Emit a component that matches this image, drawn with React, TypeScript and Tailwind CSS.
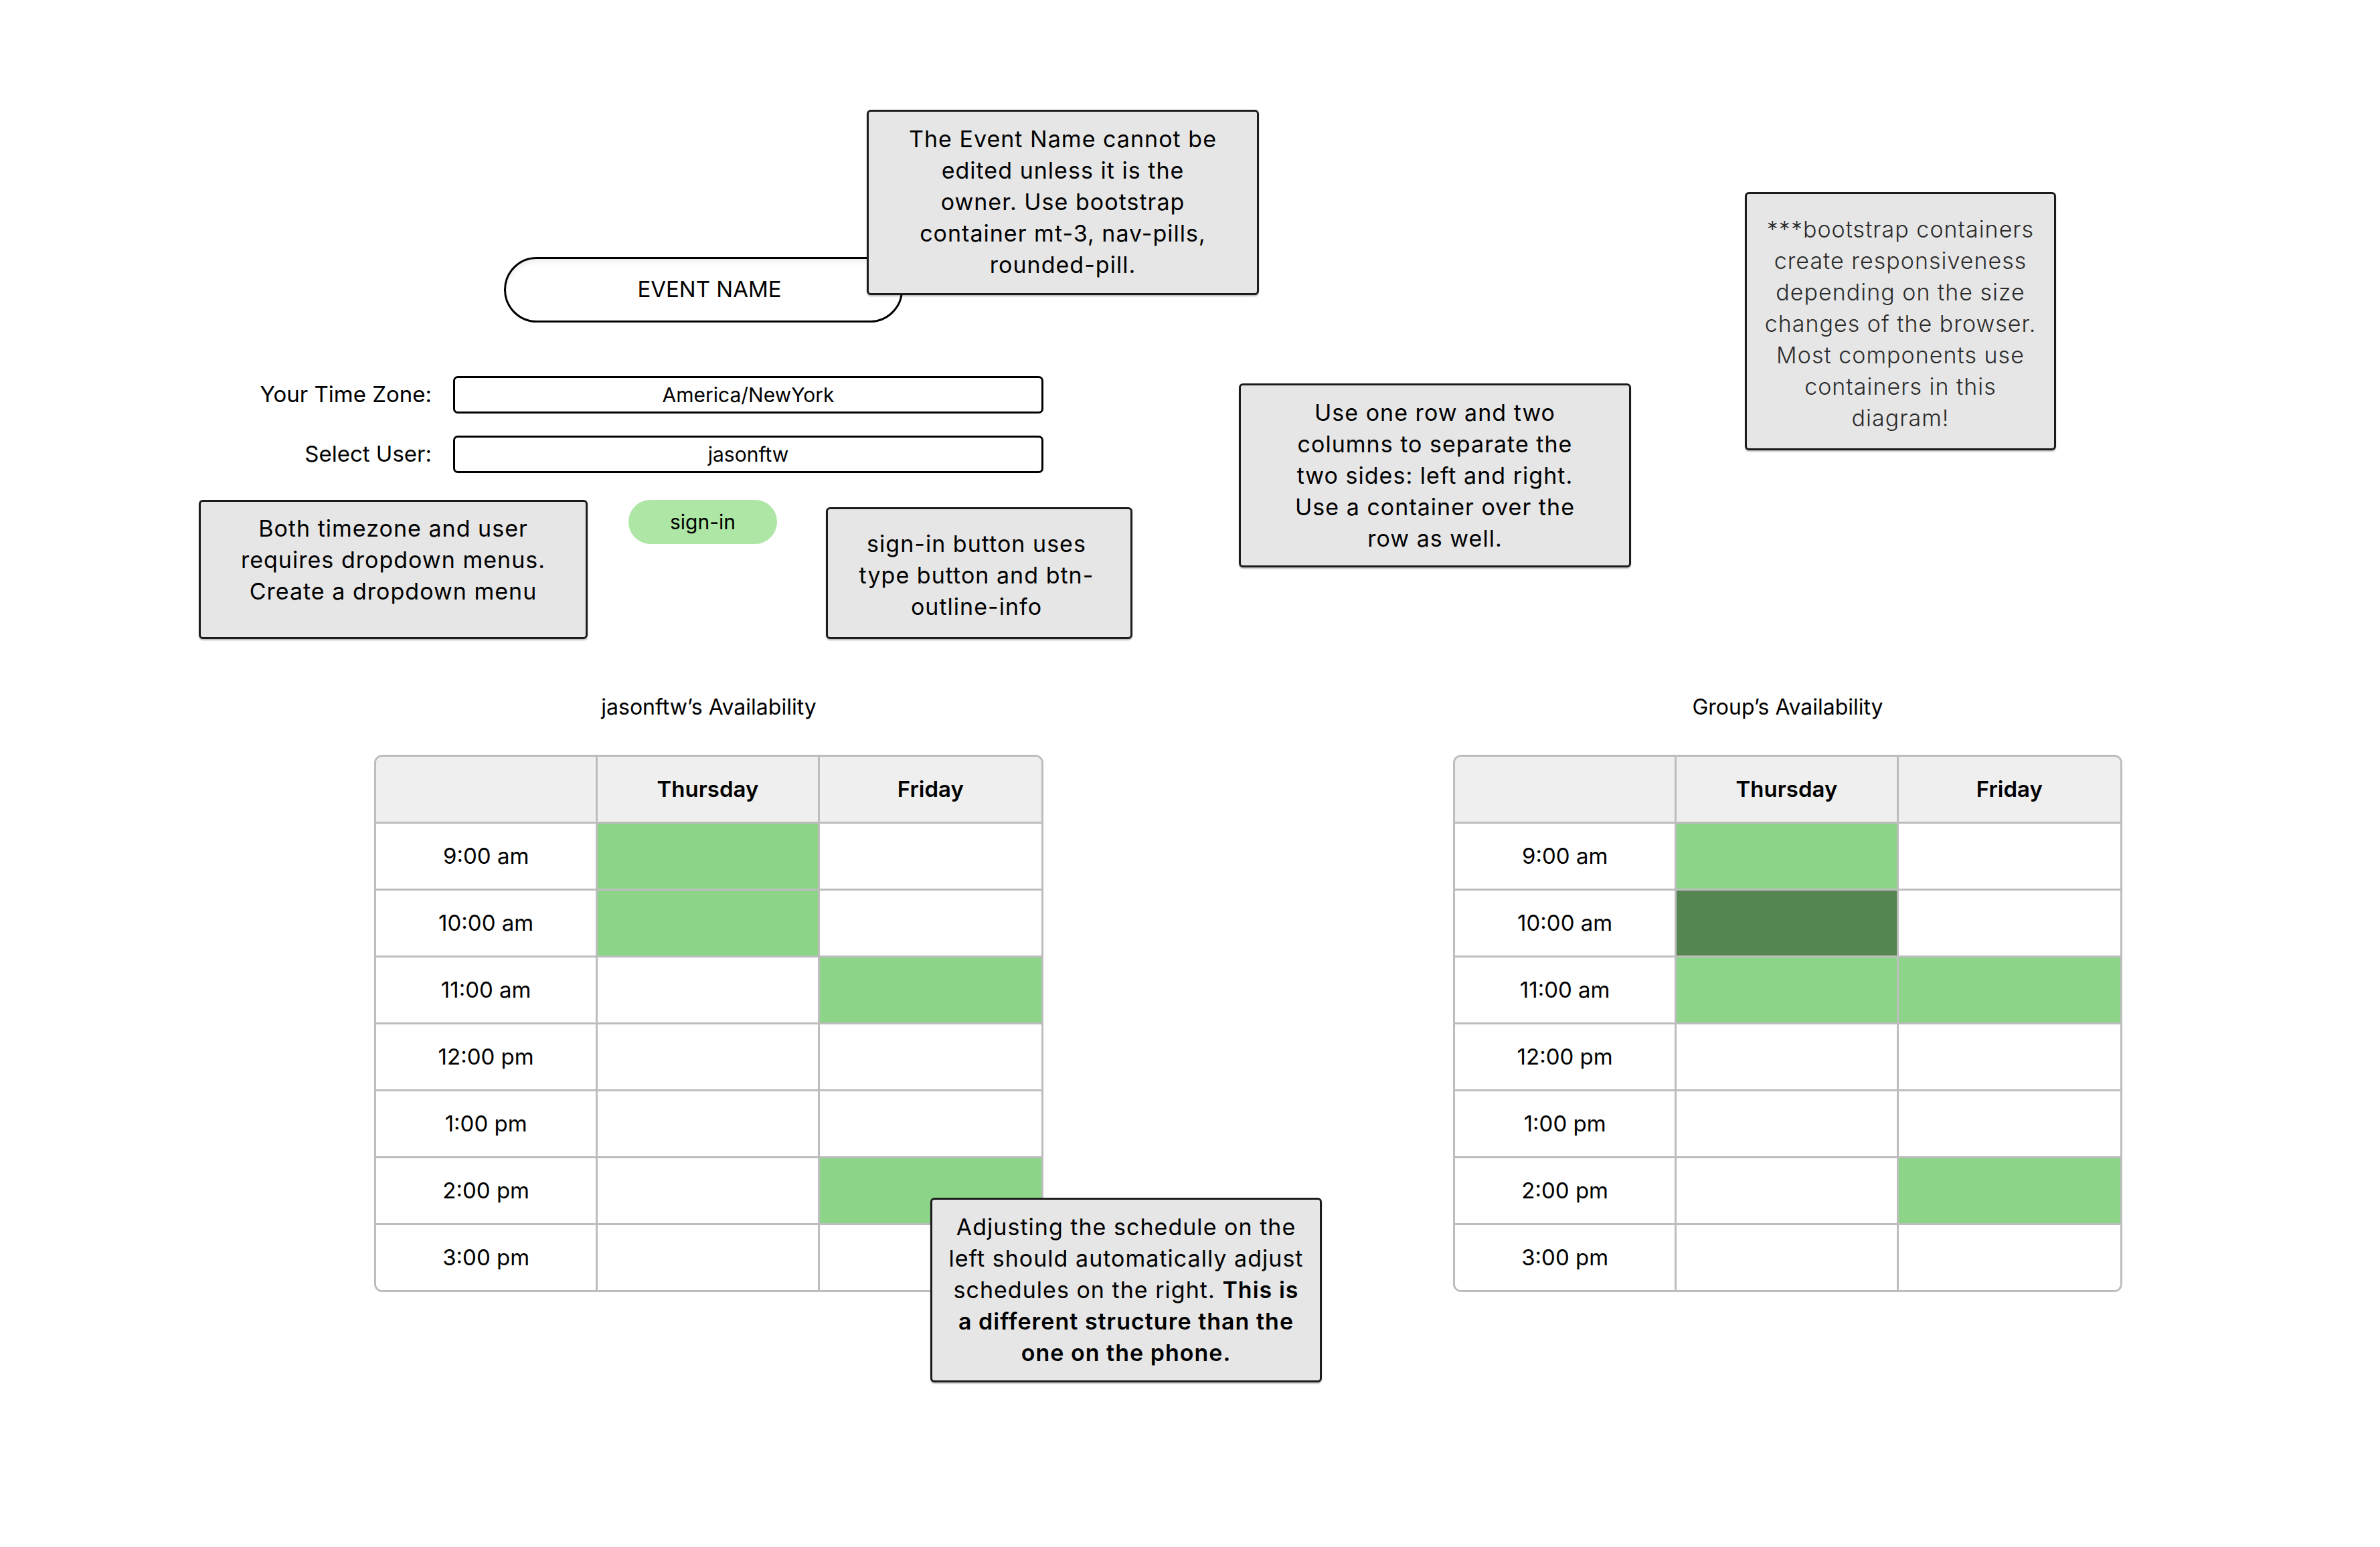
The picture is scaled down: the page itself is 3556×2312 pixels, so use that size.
import React from "react";

/**
 * Event availability wireframe (desktop layout)
 *
 * Main column holds the event name pill, the timezone / user pickers,
 * the sign-in button and the two availability grids. Annotation notes
 * sit on top of the canvas like sticky notes.
 */

type Slot = 0 | 1 | 2; // 0 = free, 1 = available, 2 = everyone available

interface Row {
  time: string;
  thu: Slot;
  fri: Slot;
}

const myRows: Row[] = [
  { time: "9:00 am", thu: 1, fri: 0 },
  { time: "10:00 am", thu: 1, fri: 0 },
  { time: "11:00 am", thu: 0, fri: 1 },
  { time: "12:00 pm", thu: 0, fri: 0 },
  { time: "1:00 pm", thu: 0, fri: 0 },
  { time: "2:00 pm", thu: 0, fri: 1 },
  { time: "3:00 pm", thu: 0, fri: 0 },
];

const groupRows: Row[] = [
  { time: "9:00 am", thu: 1, fri: 0 },
  { time: "10:00 am", thu: 2, fri: 0 },
  { time: "11:00 am", thu: 1, fri: 1 },
  { time: "12:00 pm", thu: 0, fri: 0 },
  { time: "1:00 pm", thu: 0, fri: 0 },
  { time: "2:00 pm", thu: 0, fri: 1 },
  { time: "3:00 pm", thu: 0, fri: 0 },
];

const slotColor = (slot: Slot) => {
  if (slot === 2) return "bg-[#558651]";
  if (slot === 1) return "bg-[#8cd488]";
  return "bg-white";
};

function AvailabilityTable({ title, rows }: { title: string; rows: Row[] }) {
  return (
    <div className="w-[1000px] flex flex-col items-center">
      <h2 className="text-[32px] leading-[36px] font-normal">{title}</h2>

      <div className="mt-[53px] w-full rounded-[12px] border-[3px] border-[#bdbdbd] overflow-hidden">
        {/* Header */}
        <div className="grid grid-cols-3 bg-[#efefef] border-b-[3px] border-[#bdbdbd]">
          <div className="h-[97px] border-r-[3px] border-[#bdbdbd]" />
          <div className="h-[97px] border-r-[3px] border-[#bdbdbd] flex items-center justify-center text-[33px] font-semibold">
            Thursday
          </div>
          <div className="h-[97px] flex items-center justify-center text-[33px] font-semibold">
            Friday
          </div>
        </div>

        {/* Time rows */}
        {rows.map((row, i) => (
          <div
            key={row.time}
            className={`grid grid-cols-3 ${i < rows.length - 1 ? "border-b-[3px] border-[#bdbdbd]" : ""}`}
          >
            <div className="h-[97px] bg-white border-r-[3px] border-[#bdbdbd] flex items-center justify-center text-[33px]">
              {row.time}
            </div>
            <div className={`h-[97px] border-r-[3px] border-[#bdbdbd] ${slotColor(row.thu)}`} />
            <div className={`h-[97px] ${slotColor(row.fri)}`} />
          </div>
        ))}
      </div>
    </div>
  );
}

function FormRow({ label, value }: { label: string; value: string }) {
  return (
    <div className="flex items-center gap-[32px]">
      <label className="w-[260px] text-right text-[33px] whitespace-nowrap">{label}</label>
      <div className="w-[882px] h-[56px] rounded-[7px] border-[3px] border-black flex items-center justify-center text-[30px]">
        {value}
      </div>
    </div>
  );
}

// Annotation sticky note
function Note({
  className,
  children,
}: {
  className: string;
  children: React.ReactNode;
}) {
  return (
    <div
      className={`absolute bg-[#e6e6e6] border-[3px] border-[#1c1c1c] rounded-[6px] shadow-[0_2px_2px_rgba(0,0,0,0.25)] text-center text-[34px] tracking-[0.03em] leading-[47px] whitespace-nowrap ${className}`}
    >
      {children}
    </div>
  );
}

export default function App() {
  return (
    <div className="relative w-[3556px] h-[2312px] bg-white text-black font-['Inter','Noto_Sans',sans-serif] overflow-hidden">
      <div className="pt-[384px]">
        {/* Event name pill */}
        <div className="ml-[753px] w-[596px] h-[98px] rounded-full border-[3px] border-black shadow-[inset_0_8px_8px_-4px_rgba(0,0,0,0.08)] flex items-center justify-center pl-[18px] text-[33px]">
          EVENT NAME
        </div>

        {/* Dropdowns */}
        <div className="ml-[385px] mt-[80px] flex flex-col gap-[33px]">
          <FormRow label="Your Time Zone:" value="America/NewYork" />
          <FormRow label="Select User:" value="jasonftw" />
        </div>

        <div className="mt-[40px] pl-[939px]">
          <button
            type="button"
            className="w-[222px] h-[66px] rounded-full bg-[#ade6a5] text-[30px] flex items-center justify-center"
          >
            sign-in
          </button>
        </div>

        {/* Availability grids */}
        <div className="mt-[226px] ml-[559px] flex gap-[612px]">
          <AvailabilityTable title="jasonftw’s Availability" rows={myRows} />
          <AvailabilityTable title="Group’s Availability" rows={groupRows} />
        </div>
      </div>

      {/* Notes */}
      <Note className="left-[1295px] top-[164px] w-[586px] h-[277px] pt-[17px]">
        The Event Name cannot be
        <br />
        edited unless it is the
        <br />
        owner. Use bootstrap
        <br />
        container mt-3, nav-pills,
        <br />
        rounded-pill.
      </Note>

      <Note className="left-[297px] top-[747px] w-[581px] h-[208px] pt-[16px]">
        Both timezone and user
        <br />
        requires dropdown menus.
        <br />
        Create a dropdown menu
      </Note>

      <Note className="left-[1234px] top-[758px] w-[458px] h-[197px] pt-[28px] pr-[8px]">
        sign-in button uses
        <br />
        type button and btn-
        <br />
        outline-info
      </Note>

      <Note className="left-[1851px] top-[573px] w-[586px] h-[275px] pt-[17px]">
        Use one row and two
        <br />
        columns to separate the
        <br />
        two sides: left and right.
        <br />
        Use a container over the
        <br />
        row as well.
      </Note>

      <Note className="left-[2607px] top-[287px] w-[465px] h-[386px] pt-[29px] font-light text-[#2b2b2b]">
        ***bootstrap containers
        <br />
        create responsiveness
        <br />
        depending on the size
        <br />
        changes of the browser.
        <br />
        Most components use
        <br />
        containers in this
        <br />
        diagram!
      </Note>

      <Note className="left-[1390px] top-[1790px] w-[585px] h-[276px] pt-[17px]">
        Adjusting the schedule on the
        <br />
        left should automatically adjust
        <br />
        schedules on the right. <span className="font-semibold">This is</span>
        <br />
        <span className="font-semibold">a different structure than the</span>
        <br />
        <span className="font-semibold">one on the phone.</span>
      </Note>
    </div>
  );
}
